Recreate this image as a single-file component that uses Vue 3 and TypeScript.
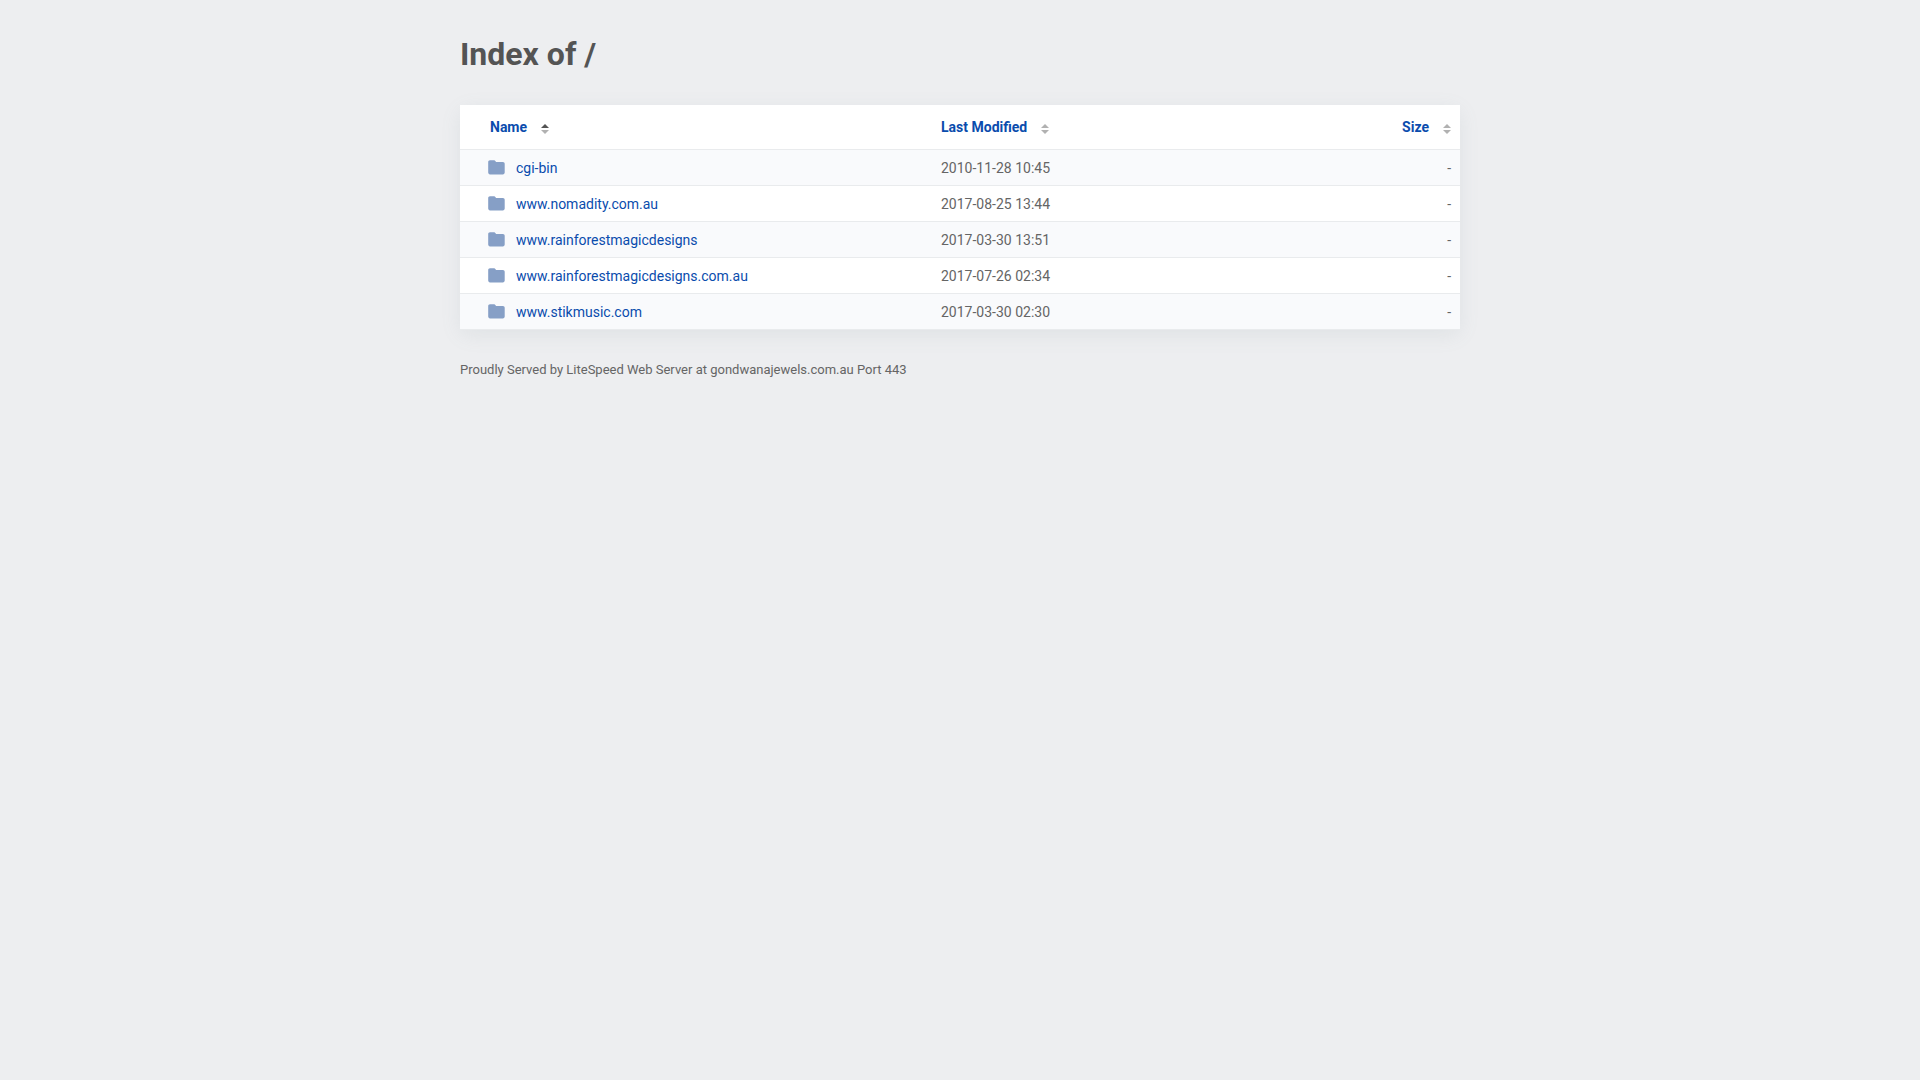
<script setup lang="ts">
import { computed, ref } from 'vue'

interface Entry {
  name: string
  modified: string
  size: string
}

type Key = keyof Entry

const columns: { key: Key; label: string }[] = [
  { key: 'name', label: 'Name' },
  { key: 'modified', label: 'Last Modified' },
  { key: 'size', label: 'Size' },
]

const entries: Entry[] = [
  { name: 'cgi-bin', modified: '2010-11-28 10:45', size: '-' },
  { name: 'www.nomadity.com.au', modified: '2017-08-25 13:44', size: '-' },
  { name: 'www.rainforestmagicdesigns', modified: '2017-03-30 13:51', size: '-' },
  { name: 'www.rainforestmagicdesigns.com.au', modified: '2017-07-26 02:34', size: '-' },
  { name: 'www.stikmusic.com', modified: '2017-03-30 02:30', size: '-' },
]

const sortKey = ref<Key>('name')
const ascending = ref(true)

const sorted = computed(() => {
  const direction = ascending.value ? 1 : -1
  return [...entries].sort((a, b) => direction * a[sortKey.value].localeCompare(b[sortKey.value]))
})

function sortBy(key: Key) {
  ascending.value = sortKey.value === key ? !ascending.value : true
  sortKey.value = key
}
</script>

<template>
  <main class="page">
    <h1>Index of /</h1>
    <table>
      <thead>
        <tr>
          <th v-for="column in columns" :key="column.key" :class="column.key" scope="col">
            <button type="button" @click="sortBy(column.key)">
              {{ column.label }}
              <svg class="arrows" viewBox="0 0 8 10" aria-hidden="true">
                <path :class="{ active: sortKey === column.key && ascending }" d="M0 4 L4 0 L8 4 Z" />
                <path :class="{ active: sortKey === column.key && !ascending }" d="M0 6 L4 10 L8 6 Z" />
              </svg>
            </button>
          </th>
        </tr>
      </thead>
      <tbody>
        <tr v-for="entry in sorted" :key="entry.name">
          <td class="name">
            <a :href="`#${entry.name}`">
              <svg class="folder" viewBox="0 0 17 15" aria-hidden="true">
                <path d="M2 .3h4.2c.5 0 .8.2 1.1.6l.8 1.2h6.8c1 0 1.8.8 1.8 1.8v8.7c0 1-.8 1.8-1.8 1.8H2c-1 0-1.8-.8-1.8-1.8V2.1C.2 1.1 1 .3 2 .3Z" />
              </svg>
              {{ entry.name }}
            </a>
          </td>
          <td class="modified">{{ entry.modified }}</td>
          <td class="size">{{ entry.size }}</td>
        </tr>
      </tbody>
    </table>
    <footer>Proudly Served by LiteSpeed Web Server at gondwanajewels.com.au Port 443</footer>
  </main>
</template>

<style>
body {
  background: #edeef0;
}
</style>

<style scoped>
.page {
  box-sizing: border-box;
  max-width: 1040px;
  margin: 0 auto;
  padding: 32px 20px;
  color: #656565;
  font: 14px/20px Roboto, "Liberation Sans", sans-serif;
}

h1 {
  margin: 0 0 29px;
  color: #545454;
  font-size: 32px;
  line-height: 44px;
  font-weight: 700;
}

table {
  width: 100%;
  table-layout: fixed;
  border-collapse: separate;
  border-spacing: 0;
  background: #fff;
  box-shadow: 0 5px 20px -2px rgba(120, 145, 150, 0.14);
}

th,
td {
  padding: 0 9px;
  border-bottom: 1px solid #e9ebed;
  text-align: left;
}

th {
  height: 44px;
}

td {
  height: 35px;
}

tbody tr:nth-child(odd) {
  background: #f9fafc;
}

th.name {
  width: 45%;
  box-sizing: border-box;
  padding-left: 30px;
}

td.name {
  padding-left: 28px;
}

th.modified,
td.modified {
  padding-left: 31px;
}

th.size,
td.size {
  text-align: right;
}

button {
  display: inline-flex;
  align-items: center;
  gap: 14px;
  padding: 0;
  border: 0;
  background: none;
  color: #0a4cad;
  font: inherit;
  font-weight: 700;
  cursor: pointer;
}

.arrows {
  width: 8px;
  height: 10px;
  margin-top: 3px;
  fill: #b1b1b1;
}

.arrows .active {
  fill: #545454;
}

a {
  display: flex;
  align-items: center;
  gap: 11px;
  padding-top: 1px;
  color: #0a4cad;
  text-decoration: none;
}

a:hover {
  text-decoration: underline;
}

.folder {
  width: 17px;
  height: 15px;
  margin-bottom: 1px;
  fill: #869fc6;
}

footer {
  margin-top: 30px;
  font-size: 13px;
}
</style>
